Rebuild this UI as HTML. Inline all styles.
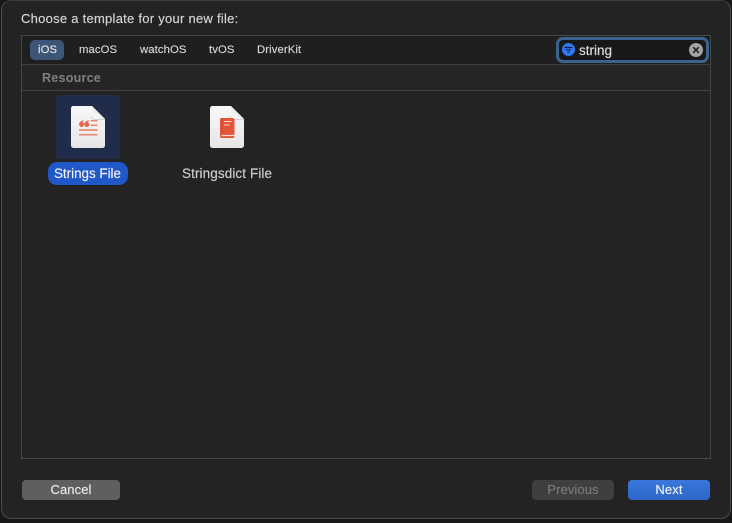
<!DOCTYPE html>
<html><head><meta charset="utf-8">
<style>
html,body{margin:0;padding:0;width:732px;height:523px;overflow:hidden;background:#171717;}
body{position:relative;font-family:"Liberation Sans",sans-serif;}
div,span{position:absolute;box-sizing:border-box;white-space:nowrap;}
.t{-webkit-text-stroke:.15px currentColor;}
.win{left:1px;top:0;width:730px;height:519px;background:#232323;border-radius:10px;border:1px solid #4c4c4c;border-top-color:#3c3c3c;}
.panel{left:21px;top:35px;width:690px;height:424px;border:1px solid #464646;background:#232323;}
.tabbar{left:22px;top:36px;width:688px;height:29px;background:#1f1f1f;border-bottom:1px solid #3d3d3d;}
.tab{top:43px;font-size:11.3px;line-height:14px;color:#d6d6d6;letter-spacing:.1px;}
.sec{left:22px;top:65px;width:688px;height:26px;background:#252525;border-bottom:1px solid #434343;}
.btn{top:480px;height:20px;border-radius:4px;font-size:13px;line-height:20px;text-align:center;letter-spacing:.1px;}
</style></head><body>
<div class="win"></div>
<div class="t" style="left:21px;top:11px;font-size:13px;line-height:16px;color:#d6d6d6;letter-spacing:.26px;">Choose a template for your new file:</div>
<div class="panel"></div>
<div class="tabbar"></div>
<div style="left:30px;top:40px;width:34px;height:20px;border-radius:5px;background:#3c5677;"></div>
<div class="tab t" style="left:38px;color:#e8e8e8;">iOS</div>
<div class="tab t" style="left:79px;">macOS</div>
<div class="tab t" style="left:140px;">watchOS</div>
<div class="tab t" style="left:209px;">tvOS</div>
<div class="tab t" style="left:257px;">DriverKit</div>
<div class="sec"></div>
<div style="left:42px;top:70px;font-size:12.6px;line-height:16px;font-weight:bold;color:#808080;letter-spacing:.2px;">Resource</div>

<div style="left:556px;top:37px;width:153px;height:26px;border-radius:7px;background:#181818;border:3px solid #3a6390;"></div>
<svg style="position:absolute;left:561px;top:42px" width="16" height="16" viewBox="0 0 16 16"><circle cx="7.500" cy="7.500" r="6.500" fill="#2f78f2"/><path d="M3.600 5.500h7.800M5.200 7.800h4.600M6.500 10h2" stroke="#10213d" stroke-width="1.200" fill="none"/></svg>
<div class="t" style="left:579px;top:43px;font-size:13.5px;line-height:16px;color:#dedede;">string</div>
<svg style="position:absolute;left:688px;top:42px" width="16" height="16" viewBox="0 0 16 16"><circle cx="8" cy="8" r="7" fill="#a3a3a3"/><path d="M5.200 5.200l5.600 5.600M10.800 5.200l-5.600 5.600" stroke="#222" stroke-width="1.600" fill="none"/></svg>

<div style="left:56px;top:95px;width:64px;height:64px;border-radius:4px;background:#212c4b;"></div>
<svg style="position:absolute;left:70px;top:105px" width="36" height="44" viewBox="0 0 36 44">
<defs>
<linearGradient id="p" x1="0" y1="0" x2="0" y2="1"><stop offset="0" stop-color="#f8f8f8"/><stop offset="1" stop-color="#e6e6e6"/></linearGradient>
<linearGradient id="f" x1="0" y1="1" x2="1" y2="0"><stop offset="0" stop-color="#ffffff"/><stop offset="1" stop-color="#d4d4d4"/></linearGradient>
</defs>
<path d="M3 1h19L35 14v26.500a2.500 2.500 0 0 1-2.500 2.500h-29A2.500 2.500 0 0 1 1 40.500v-37A2.500 2.500 0 0 1 3 1z" fill="url(#p)"/>
<path d="M22 1L35 14H25a3 3 0 0 1-3-3z" fill="url(#f)"/>
<path d="M22 11a3 3 0 0 0 3 3h10v1H25a4 4 0 0 1-4-4z" fill="#d2d2d2"/>
<path d="M13.600 15.500c-2.600.4-4.300 1.800-4.300 4a2.300 2.300 0 1 0 2.300-2.300c0-.5.600-.8 2-1z" fill="#e8664c" stroke="#e8664c" stroke-width=".5"/>
<path d="M18.800 15.500c-2.600.4-4.300 1.800-4.300 4a2.300 2.300 0 1 0 2.300-2.300c0-.5.600-.8 2-1z" fill="#e8664c" stroke="#e8664c" stroke-width=".5"/>
<path d="M20.500 15.800h7M20.500 20.200h7M9 25h18.500M9 29.800h18.500" stroke="#e8664c" stroke-width="1.200" fill="none"/>
</svg>
<div style="left:48px;top:162px;width:80px;height:23px;border-radius:9px;background:#2158c8;"></div>
<div class="t" style="left:54px;top:166px;font-size:13.4px;line-height:16px;color:#f2f2f2;">Strings File</div>

<svg style="position:absolute;left:209px;top:105px" width="36" height="44" viewBox="0 0 36 44">
<path d="M3.500 1H22l13 13v26.500a2.500 2.500 0 0 1-2.500 2.500h-29A2.500 2.500 0 0 1 1 40.500v-37A2.500 2.500 0 0 1 3.500 1z" fill="url(#p)"/>
<path d="M22 1L35 14H25a3 3 0 0 1-3-3z" fill="url(#f)"/>
<path d="M22 11a3 3 0 0 0 3 3h10v1H25a4 4 0 0 1-4-4z" fill="#d2d2d2"/>
<rect x="11" y="13" width="14.500" height="20" rx="1.800" fill="#e5553a"/>
<path d="M13 13v16" stroke="#c9432b" stroke-width=".8"/>
<path d="M15 16.500h7.500M15 20h5.500" stroke="#f7d9d1" stroke-width="1.100"/>
<path d="M12.500 30.500h13" stroke="#f7d9d1" stroke-width="1.200"/>
</svg>
<div class="t" style="left:182px;top:166px;font-size:13.5px;line-height:16px;color:#cfcfcf;letter-spacing:.1px;">Stringsdict File</div>

<div class="btn t" style="left:22px;width:98px;background:#5f5f5f;color:#e8e8e8;">Cancel</div>
<div class="btn t" style="left:532px;width:82px;background:#3f3f3f;color:#7a7a7a;">Previous</div>
<div class="btn t" style="left:628px;width:82px;background:linear-gradient(#3a78dc,#2d66c8);color:#f0f0f0;">Next</div>
</body></html>
